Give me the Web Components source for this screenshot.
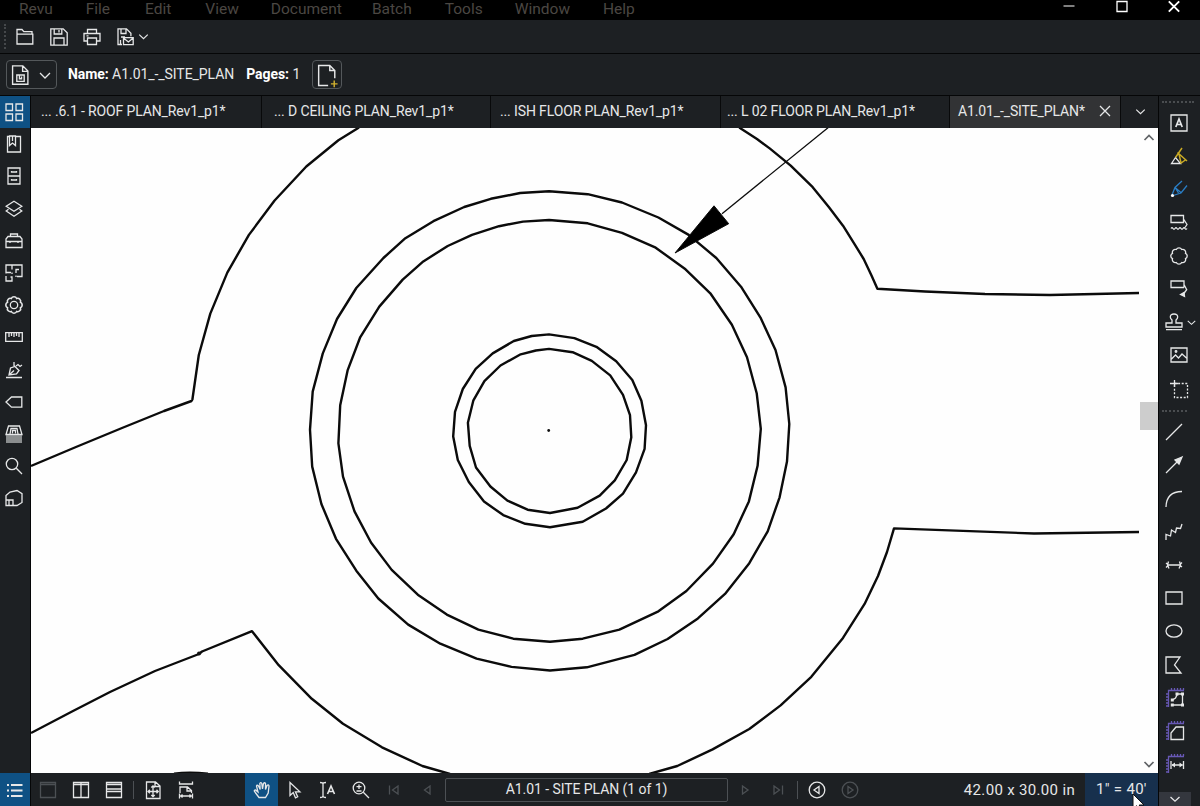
<!DOCTYPE html>
<html lang="en">
<head>
<meta charset="utf-8">
<title>A1.01_-_SITE_PLAN</title>
<style>
    html, body {
        margin: 0;
        width: 1200px;
        height: 806px;
        overflow: hidden;
        background: #1d2023;
    }
</style>
</head>
<body>
<revu-app></revu-app>

<script>
// every glyph is drawn on an 18 x 18 grid
const icons = {
    folder: '<path d="M1 15V1.500h5l1.800 2.200H16V6M1 16V6.200h15.800V16z"/>',
    save: '<path d="M.8.8h12.4l4 4v12.4H.8zM4.2 1v5h7.6V1M9 2v2.5M4 17v-7h10v7"/>',
    print: '<path d="M4.5 5V1.500h9V5M4 13H1V5.500h16V13h-3M4.5 10h9v6.500h-9zM3.5 7.800h2"/>',
    saveMail: '<path d="M5 16.500H1V.8h8.500l4.400 4.400v3M4 1v4.500h5V1M4 9h4M3.500 12v4M6.500 9.600h9.700v7H6.500zM6.500 10l4.900 4 4.800-4"/>',
    fileInfo: '<path d="M1.500.8h9.700l4.800 4.800v12.600H1.500zM11 1v5h5M5.500 9.500h7v6h-7zM8 9.500v3.500h2v-2"/>',
    fileAdd: '<path d="M10 18.500H1.500V.5h10l4.500 4.500v7M11.500.8V5h4.500"/><path d="M15.500 14v6M12.500 17h6" stroke="#d0b02f"/>',
    down: '<path d="M4.500 7l4.500 4.200L13.500 7"/>',
    downWide: '<path d="M4 7l5 5 5-5"/>',
    up: '<path d="M4.500 12l4.500-4.500 4.500 4.500" stroke-width="1.700"/>',
    downBold: '<path d="M4.500 7l4.500 4.500L13.500 7" stroke-width="1.700"/>',
    close: '<path d="M4 4l10 10M14 4L4 14"/>',
    winMin: '<path d="M3.500 9h11" stroke="#aaa" stroke-width="1.500"/>',
    winMax: '<path d="M4 4.500h10v10H4z"/>',
    winClose: '<path d="M3.800 4.300l10.400 10.400M14.200 4.300L3.800 14.700" stroke-width="1.900"/>',
    grid: '<path d="M1 1h6.500v6.500H1zM11 1h6.500v6.500H11zM1 11h6.500v6.500H1zM11 11h6.500v6.500H11z"/>',
    bookmark: '<path d="M5 1.500H2.500V17h13V1.500H11M4.500 1h6v9.500l-3-2.500-3 2.500zM7.500 1v5"/>',
    cabinet: '<path d="M3 1h12v16H3zM3 9h12M6.500 4v1h5V4M6.500 12v1h5v-1"/>',
    layers: '<path d="M9 1.200l7.800 5L9 11.200 1.200 6.200zM3.500 9.200L1.200 11 9 16.200l7.800-5.200-2.300-1.800"/>',
    toolbox: '<path d="M1 15.500V7l2-2.500h12L17 7v8.500zM5.500 4.500V2h7v2.500M1 9.500h16M5 9v2M13 9v2"/>',
    spaces: '<path d="M1 9.500V1h16v11.500h-5M1 8.500h5M1 12V17h6v-4H5.500M7 1v4.500M7 10V8.500M11 9V5.500h3M11 13V11.500"/>',
    gear: '<path d="M15.500 11.700A3 3 0 0 1 11.700 15.500 3 3 0 0 1 6.300 15.500 3 3 0 0 1 2.500 11.700 3 3 0 0 1 2.500 6.300 3 3 0 0 1 6.300 2.500 3 3 0 0 1 11.700 2.500 3 3 0 0 1 15.500 6.300 3 3 0 0 1 15.500 11.700z" stroke-width="1.600"/><circle cx="9" cy="9" r="3.700"/>',
    ruler: '<path d="M.7 4.700h16.600v8.600H.7zM4 5v4M6.500 5v3M9 5v4M11.500 5v3M14 5v4"/>',
    sign: '<path d="M1 16.500h16M4 14l1.500-7 4.500-1.500 4 4-2.500 3.500zM4 14l5-4.500M9 1v3.500l5.500 5.500M11 5l2-1.500 2 2L17 4"/>',
    tag: '<path d="M1 9l5.500-5h10.300v10.200H6.500z"/>',
    stack: '<path d="M3.500 1h11L17 9.500H1z"/><path d="M1 11h16M1 13h16M1 15h16M1 17h16" stroke="#aeb1b3"/><path d="M5 9L6 3.500h6L13 9M7.500 8.500V5.500h3v3" />',
    search: '<circle cx="7" cy="7" r="5.700"/><path d="M11.300 11.300L17 17"/>',
    cube: '<path d="M1 6.500L5 3l7-1.500 5 3.200v8.800l-5 3H1zM4 16v-5h4v5M1 11h3"/>',
    text: '<path d="M1 1h16v16H1z"/><path d="M5.800 13L9 5l3.200 8M7 10.500h4" stroke-width="1.700"/>',
    highlight: '<path d="M1.500 16.500l4-6 5 6z"/><path d="M5.500 10.500L12 1M7.500 5.500L17 14M10.500 16.500L16 12.500M9 7l2 9" stroke="#c9aa25" stroke-width="1.500"/>',
    pen: '<path d="M2 15L5 7.500 12 1M3 15.500l8-2.500 6-7.500M5 7.500l3.500 5.500M5 7.500l6.500 5.500" stroke="#2a7dc4"/><circle cx="2.500" cy="15.500" r="1.600" fill="#fff" stroke="none"/>',
    callCloud: '<path d="M13 8.500H1V1.500h12.500v7zM13.500 5L17 10.500l-2 3M1 14.500q1-1.500 2 0t2 0 2 0 2 0 2 0 2 0 2 0 2 0" />',
    cloud: '<path d="M15.500 11.700A3 3 0 0 1 11.700 15.500 3 3 0 0 1 6.300 15.500 3 3 0 0 1 2.500 11.700 3 3 0 0 1 2.500 6.300 3 3 0 0 1 6.300 2.500 3 3 0 0 1 11.700 2.500 3 3 0 0 1 15.500 6.300 3 3 0 0 1 15.500 11.700z"/>',
    callout: '<path d="M14 7.500H1V1h13v6.500M14 4.500l2.700 5.200L13.500 14"/><path d="M10.500 14.500l3.500-2 .5 4z" fill="currentColor"/>',
    stamp: '<path d="M1 14V10h6V7Q5.300 5.500 5.300 4 5.300 1 9 1t3.700 3Q12.700 5.500 11 7v3h6v4zM1 16.700h16"/>',
    image: '<path d="M1 2h16v14H1zM1.500 13l4-4 3 3 3.500-4 5 4.500"/><circle cx="6" cy="5.500" r=".8"/>',
    crop: '<path d="M4.500 3.500H17.500V17.500H4.500z" stroke-dasharray="2 1.600"/><path d="M0 3.500h8M4.500 0v7"/>',
    line: '<path d="M1 17L17 1"/>',
    arrow: '<path d="M1 17L13 5"/><path d="M17 1l-7 3 4 4z" fill="currentColor"/>',
    arc: '<path d="M1 17Q1.500 1.500 17 1.500"/>',
    poly: '<path d="M1 17v-5.500l4.500 1.500 1-6 4 2.500 1-4.500 4 .5L17 1"/>',
    dimension: '<path d="M2.500 9h13M3.500 5.500L2.500 9l1.500 3.500M14.500 5.500L15.500 9l-1.500 3.500M1 7l2.500 2L1 11.500M17 6.500L14.500 9l2.500 2"/>',
    rect: '<path d="M1 3h16v12H1z"/>',
    ellipse: '<ellipse cx="9" cy="9" rx="8" ry="6.200"/>',
    polygon: '<path d="M1 1h14L9.500 9l6.500 8H1z"/>',
    measureShape: '<path d="M2.500 18V1.500H18M0 5h2M0 8h2M0 11h2M0 14h2M0 17h2M5.500-1v2M8.500-1v2M11.500-1v2M14.500-1v2M17.500-1v2" stroke="#6758b5"/><path d="M6.500 16h10V5h-5L9.500 9l-3 2"/><path d="M4.800 9.500h3v3h-3zM15 3.500h3v3h-3zM4.800 14.500h3v3h-3zM15 14.500h3v3h-3zM9.500 3.500h3v3h-3z" fill="currentColor" stroke="none"/>',
    measureArea: '<path d="M2.500 18V1.500H18M0 5h2M0 8h2M0 11h2M0 14h2M0 17h2M5.500-1v2M8.500-1v2M11.500-1v2M14.500-1v2M17.500-1v2" stroke="#6758b5"/><path d="M5 17.500v-6.500l5-6h7.500v12.500z"/>',
    measureLength: '<path d="M2.500 18V1.500H18M0 5h2M0 8h2M0 11h2M0 14h2M0 17h2M5.500-1v2M8.500-1v2M11.500-1v2M14.500-1v2M17.500-1v2" stroke="#6758b5"/><path d="M5 6v8M17.500 6v8M6 10h10.500"/><path d="M5.500 10L9 7.500v5zM17 10l-3.500-2.500v5z" fill="currentColor" stroke="none"/>',
    list: '<path d="M6 4h11.500M6 9.500h11.500M6 15h11.500M2 4h2M2 9.500h2M2 15h2" stroke-width="1.900"/>',
    pane: '<path d="M1.500 1.500h15v15h-15zM1.500 3.500h15"/>',
    splitV: '<path d="M1.500 1.500h15v15h-15zM9 1.500v15M1.500 3.500h15"/>',
    splitH: '<path d="M1.500 1.500h15v15h-15zM1.500 3.500h15M1.500 8h15M1.500 10.500h15"/>',
    fitPage: '<path d="M2.500 1h9l4.500 4v12.500H2.500zM11 1v4.500h5M9 4.500v11M4 10.500h10M7.300 6.500L9 4.800l1.700 1.700M7.300 14L9 15.700l1.700-1.700M5.800 8.800l-1.700 1.700 1.700 1.700M12.500 8.800l1.700 1.700-1.700 1.700"/>',
    fitWidth: '<path d="M2.500.5V3h13V.5M3 12V6h7.500l4 3.500V12M10 6v4h4.500M2.500 12.500v5M15.500 12.500v5M3 15h12M5.500 13.500L4 15l1.500 1.500M12.500 13.500L14 15l-1.500 1.500"/>',
    hand: '<path d="M6 16.500L1.500 10.500q-.6-1.500 1-1.500l2.500 2L3.500 5q.5-1.700 2 0l1.700 3.500L6.800 2.500q1-1.600 2 0l.7 5.500 1-5.500q1.200-1.500 2 0v6l1.500-4q1.500-1.300 2 .5L15.200 12 12.500 16.500z"/>',
    pointer: '<path d="M4 1.500v13l3.200-3 2.300 5.300 2.200-1-2.300-5h4.500z"/>',
    textSelect: '<path d="M1 1.500q3 0 3 1.500v12q0 1.500-3 1.500M7 1.500Q4 1.500 4 3M7 16.500q-3 0-3-1.500"/><path d="M8.500 13L12 5l3.500 8M9.700 10.500h4.600" stroke-width="1.600"/>',
    zoom: '<circle cx="7" cy="7" r="5.800"/><path d="M11.300 11.300L17 17M4.500 5.700h5M7 3.400V8M4.500 10h5"/>',
    first: '<path d="M4.500 4.500v9M13 5v8L7.500 9z"/>',
    prev: '<path d="M12 5v8L6.500 9z"/>',
    next: '<path d="M6.500 5v8L12 9z"/>',
    last: '<path d="M13.500 4.500v9M5 5v8L10.500 9z"/>',
    back: '<circle cx="9" cy="9" r="7.800"/><path d="M11 5.500v7L6 9z"/>',
    forward: '<circle cx="9" cy="9" r="7.800"/><path d="M7 5.500v7L12 9z"/>'
};

class RevuIcon extends HTMLElement {
    constructor() {
        super();
        const name = this.getAttribute('name');
        const size = this.getAttribute('size') || 18;
        this.attachShadow({ mode: 'open' });
        this.shadowRoot.innerHTML = `
        <style>
            :host { display: block; flex: none; width: ${size}px; height: ${size}px; }
            svg { display: block; overflow: visible; }
        </style>
        <svg width="${size}" height="${size}" viewBox="0 0 18 18" fill="none" stroke="currentColor" stroke-width="1.3">${icons[name] || ''}</svg>`;
    }
}
customElements.define('revu-icon', RevuIcon);

class RevuCell extends HTMLElement {
    constructor() {
        super();
        this.attachShadow({ mode: 'open' });
        this.shadowRoot.innerHTML = `
        <style>
            :host {
                display: flex;
                flex: none;
                align-items: center;
                justify-content: center;
                box-sizing: border-box;
                width: var(--cell-width, 33px);
                height: var(--cell-height, 33px);
            }
            :host([active]) { background: #0f5184; }
            :host([off]) { color: #4c5054; }
        </style>
        <slot></slot>`;
    }
}
customElements.define('revu-cell', RevuCell);

class RevuMenubar extends HTMLElement {
    constructor() {
        super();
        this.attachShadow({ mode: 'open' });
        this.shadowRoot.innerHTML = `
        <style>
            :host { display: flex; height: 20px; background: #000; box-sizing: border-box; overflow: hidden; }
            nav { display: flex; gap: 32px; padding-left: 19px; color: #4b4743; font-size: 15.500px; line-height: 19px; flex: 1; }
            .win { display: flex; gap: 34.500px; padding: 0 17px 0 0; margin-top: -3px; color: #fff; }
        </style>
        <nav><slot></slot></nav>
        <div class="win">
            <revu-icon name="winMin"></revu-icon>
            <revu-icon name="winMax"></revu-icon>
            <revu-icon name="winClose"></revu-icon>
        </div>`;
    }
}
customElements.define('revu-menubar', RevuMenubar);

class RevuTab extends HTMLElement {
    constructor() {
        super();
        this.attachShadow({ mode: 'open' });
        this.shadowRoot.innerHTML = `
        <style>
            :host {
                display: flex;
                align-items: center;
                box-sizing: border-box;
                width: var(--w, 230px);
                padding: 0 6px 2px var(--pad, 8px);
                border-right: 1px solid #08090a;
                white-space: nowrap;
                letter-spacing: -.13px;
            }
            :host([active]) { background: #323335; justify-content: space-between; }
        </style>
        <slot></slot>`;
    }
}
customElements.define('revu-tab', RevuTab);

class SitePlan extends HTMLElement {
    constructor() {
        super();
        this.attachShadow({ mode: 'open' });
        this.shadowRoot.innerHTML = `
        <style>
            :host { display: flex; height: 645px; background: #fefefe; }
            svg { display: block; flex: none; }
            .scroll {
                display: flex;
                flex-direction: column;
                align-items: center;
                width: 19px;
                height: 645px;
                color: #606366;
            }
            .thumb { width: 18px; height: 28px; margin: 256px 0 auto; background: #cdcdcd; }
        </style>
        <svg width="1108" height="645" viewBox="31 128 1108 645" fill="none" stroke="#0b0b0b" stroke-width="2.4" stroke-linejoin="round">
            <path d="M359 127.500L338.400 140.300 306.300 166.500 274.600 200.500 248.900 234.900 227.300 272.600 210.300 313.600 198.800 355 192.400 399.500 191.500 401 164 411 122 428 76 447 31 466"/>
            <path d="M739.200 127.500L757 139 770 148.600 790.700 165.600 812.700 187.200 828.800 207 843 225.700 855 244.800 863.700 259 871.500 275.500 877.400 288.800 925 291.500 985 294 1050 295 1095 294 1139 293"/>
            <path d="M1139 532L1034 533.500 894 528.400 887 552 878 576 864.600 603.900 843 637.900 811.300 676.800 780.600 705.400 749.300 729 712.600 749.400 677.300 766 649.200 774"/>
            <path d="M450 774L422.400 766 382 747.300 343 723.700 311.800 698.800 278.700 665.200 252 631.200 202 651.500 199 654 155 671 110 692 73 711 31 733"/>
            <path d="M549.100 191.300L587.700 194.200 622 202.500 658.400 217.500 688.700 234.900 716.300 258 741 286.700 760.800 318.200 775.500 350 785.600 387.400 789.300 424 787 461.600 779.600 497.300 767.700 531.300 749.300 563.200 725 593.900 697.900 618.400 667.600 639 634.500 654.900 586.800 667.300 550 670.500 511.500 666.900 476.600 658.600 440.300 643.700 408.200 624.600 378.300 598.500 356.300 570.700 336 538.800 321.400 504 312.200 466.600 310 429.700 312.700 391.600 322.800 353.400 337 319 356.300 288 383.400 258 405.400 238.200 433.400 221.200 464.200 207 490.800 198.800 520.200 193z"/>
            <path d="M549.100 220L587.700 223.300 622 232.800 655.700 247.700 685.500 269.300 710.300 293.300 731.900 324.800 747 357.200 756.700 393.200 760.800 428.900 757.600 465.800 748.900 501.400 733.700 534.200 713 563.600 686.400 591 658.400 611.300 619.400 629.600 582.700 638.700 550 641.700 513.300 638.700 478.400 629.600 446.800 614.600 417.800 594.700 391.700 569.900 371 542.500 354.500 511.400 343 476.600 338.400 443.400 340.200 405.300 347.600 370.400 360 337.700 379.300 306.600 402.700 279.600 423.300 261.400 447.700 246 472 234.900 499 226.200 523 221.600z"/>
            <path d="M549 334.400L574.400 338.100 596.400 346.800 616.200 361.300 632.300 380 641.400 400.700 646 425.200 644.600 448.800 636 472.400 623 493.600 606 508.500 582.700 521.800 550 527.200 525.300 523.800 503.200 515.100 484 501.500 468.800 482 457.800 460 453.200 436.400 455 411.900 462.800 389 475.700 368.800 492.700 353.400 513.800 341 531.700 336z"/>
            <path d="M549 348.900L572.600 352.200 591.800 360.900 610.200 375.400 623 394.900 630 415.200 631.300 437.200 626.700 460 614.800 480.300 599.700 495.600 577.600 507.700 550 513 527.600 509.700 507.400 500.600 490.400 486.500 476 467.500 469.700 445.900 467.900 422.700 473.400 400.300 484.400 381.200 500.500 365.500 520.700 354.300 535.800 350.500z"/>
            <path d="M722 213.700L828.300 127.500" stroke-width="1.300"/>
            <path d="M675 253L714 205.800 728.700 223.700z" fill="#000" stroke-width="1"/>
            <path d="M174 773.500q15-2 34 0" stroke-width="2"/>
            <circle cx="548.700" cy="430.500" r="1.400" fill="#111" stroke="none"/>
            <circle cx="199" cy="653.500" r="2" fill="#111" stroke="none"/>
        </svg>
        <div class="scroll">
            <revu-icon name="up"></revu-icon>
            <div class="thumb"></div>
            <revu-icon name="downBold"></revu-icon>
        </div>`;
    }
}
customElements.define('site-plan', SitePlan);

class RevuStatus extends HTMLElement {
    constructor() {
        super();
        this.attachShadow({ mode: 'open' });
        this.shadowRoot.innerHTML = `
        <style>
            :host { display: flex; height: 33px; background: #1d2023; align-items: center; position: relative; }
            hr { width: 1px; height: 18px; margin: 0 2px 0 3px; border: 0; background: #4c5054; flex: none; }
            .gap { width: 43px; flex: none; }
            .page {
                width: 283px;
                height: 24px;
                margin: 0 0 0 2px;
                border: 1px solid #4c5054;
                border-radius: 2px;
                box-sizing: border-box;
                text-align: center;
                font-size: 14px;
                letter-spacing: -.06px;
                line-height: 21px;
                flex: none;
            }
            .size { margin-left: auto; margin-right: 10px; font-size: 15px; letter-spacing: .33px; }
            .scale { width: 73px; height: 33px; line-height: 33px; box-sizing: border-box; padding-left: 11px; background: #17304d; font-size: 15px; letter-spacing: .3px; }
            /* mouse pointer resting on the scale field */
            .mouse { position: absolute; right: 13px; bottom: -6px; }
        </style>
        <revu-cell off><revu-icon name="pane"></revu-icon></revu-cell>
        <revu-cell><revu-icon name="splitV"></revu-icon></revu-cell>
        <revu-cell><revu-icon name="splitH"></revu-icon></revu-cell>
        <hr>
        <revu-cell><revu-icon name="fitPage"></revu-icon></revu-cell>
        <revu-cell><revu-icon name="fitWidth"></revu-icon></revu-cell>
        <div class="gap"></div>
        <revu-cell active><revu-icon name="hand"></revu-icon></revu-cell>
        <revu-cell><revu-icon name="pointer"></revu-icon></revu-cell>
        <revu-cell><revu-icon name="textSelect"></revu-icon></revu-cell>
        <revu-cell><revu-icon name="zoom"></revu-icon></revu-cell>
        <revu-cell off><revu-icon name="first"></revu-icon></revu-cell>
        <revu-cell off><revu-icon name="prev"></revu-icon></revu-cell>
        <div class="page"><slot name="page"></slot></div>
        <revu-cell off><revu-icon name="next"></revu-icon></revu-cell>
        <revu-cell off><revu-icon name="last"></revu-icon></revu-cell>
        <hr>
        <revu-cell><revu-icon name="back"></revu-icon></revu-cell>
        <revu-cell off><revu-icon name="forward"></revu-icon></revu-cell>
        <div class="size"><slot name="size"></slot></div>
        <div class="scale"><slot name="scale"></slot></div>
        <svg class="mouse" width="13" height="19" viewBox="0 0 13 19"><path d="M1 1v15l3.500-3.300L7 18l2.500-1.200L7.200 12H12z" fill="#fff" stroke="#111"/></svg>`;
    }
}
customElements.define('revu-status', RevuStatus);

const leftPanels = ['bookmark', 'cabinet', 'layers', 'toolbox', 'spaces', 'gear', 'ruler', 'sign', 'tag', 'stack', 'search', 'cube'];
const markupTools = ['text', 'highlight', 'pen', 'callCloud', 'cloud', 'callout'];
const shapeTools = ['line', 'arrow', 'arc', 'poly', 'dimension', 'rect', 'ellipse', 'polygon'];
const measureTools = ['measureShape', 'measureArea', 'measureLength'];
const cells = (names) => names.map(n => `<revu-cell><revu-icon name="${n}"></revu-icon></revu-cell>`).join('');

class RevuApp extends HTMLElement {
    constructor() {
        super();
        this.attachShadow({ mode: 'open' });
        this.shadowRoot.innerHTML = `
        <style>
            :host {
                display: flex;
                flex-direction: column;
                width: 1200px;
                height: 806px;
                overflow: hidden;
                background: #1d2023;
                color: #e6e7e8;
                font: 14px/18px Roboto, "Liberation Sans", sans-serif;
            }
            .tools {
                display: flex;
                align-items: center;
                height: 34px;
                box-sizing: border-box;
                border-bottom: 1px solid #050607;
                padding-left: 4px;
                gap: 15.300px;
            }
            .grip { width: 0; height: 25px; border-left: 2px dotted #45484b; margin-right: -5px; }
            .mail { display: flex; align-items: center; margin-left: 1px; }
            .doc {
                display: flex;
                align-items: center;
                height: 42px;
                box-sizing: border-box;
                border-bottom: 1px solid #050607;
                padding-left: 6px;
            }
            .btn {
                display: flex;
                align-items: center;
                box-sizing: border-box;
                height: 29px;
                border: 1px solid #54585b;
                border-radius: 4px;
                padding: 0 2px 0 4px;
            }
            .doc p { margin: -1px 12px 0 11px; letter-spacing: -.06px; }
            .doc p + p { margin-left: 0; }
            b { font-weight: 700; color: #fff; }
            .body { display: flex; height: 710px; }
            .left {
                --cell-width: 30px;
                --cell-height: 32.200px;
                display: flex;
                flex-direction: column;
                width: 31px;
                box-sizing: border-box;
                border-right: 1px solid #050607;
                flex: none;
            }
            .left revu-icon { margin-right: 3px; }
            .left .bottom { margin-top: auto; --cell-height: 33px; }
            .main { display: flex; flex-direction: column; width: 1127px; flex: none; }
            .tabs { display: flex; height: 32px; }
            .caret { display: flex; align-items: center; padding: 0 0 1px 11px; }
            .right {
                --cell-height: 33.200px;
                --cell-width: 32px;
                display: flex;
                flex-direction: column;
                width: 42px;
                box-sizing: border-box;
                border-left: 1px solid #050607;
                overflow: hidden;
            }
            .dots { width: 32px; height: 0; border-top: 2px dotted #4a4d50; margin: 5px 0 0 3px; flex: none; }
            .right .markup { padding: 3.500px 0 0 4px; }
            .stamp { display: flex; align-items: center; height: 33.200px; gap: 1px; padding-left: 6px; }
            .right .pair { padding-left: 4px; }
            .shapes { padding: 3.500px 0 0; }
            .shapes revu-icon { margin-right: 3px; }
            .measure revu-icon { margin-right: 1px; }
            .more { display: flex; align-items: center; justify-content: center; width: 32px; height: 14px; background: #34373e; margin-top: auto; }
            .m1 { margin-right: 1px; }
            .m2 { margin-right: 2px; }
            .m3 { margin-right: 3px; }
            .doc-item { margin-right: -2px; }
        </style>
        <revu-menubar>
            <span class="m1">Revu</span><span class="m3">File</span><span class="m2">Edit</span><span>View</span><span class="doc-item">Document</span><span class="m1">Batch</span><span>Tools</span><span class="m1">Window</span><span>Help</span>
        </revu-menubar>
        <div class="tools">
            <div class="grip"></div>
            <revu-icon name="folder"></revu-icon>
            <revu-icon name="save"></revu-icon>
            <revu-icon name="print"></revu-icon>
            <div class="mail"><revu-icon name="saveMail"></revu-icon><revu-icon name="down" size="17"></revu-icon></div>
        </div>
        <div class="doc">
            <div class="btn" style="width:51px;gap:6px"><revu-icon name="fileInfo" size="19"></revu-icon><revu-icon name="downWide"></revu-icon></div>
            <p><b>Name:</b> A1.01_-_SITE_PLAN</p>
            <p><b>Pages:</b> 1</p>
            <div class="btn" style="width:30px"><revu-icon name="fileAdd" size="20"></revu-icon></div>
        </div>
        <div class="body">
            <div class="left">
                <revu-cell active><revu-icon name="grid"></revu-icon></revu-cell>
                ${cells(leftPanels)}
                <revu-cell class="bottom" active><revu-icon name="list"></revu-icon></revu-cell>
            </div>
            <div class="main">
                <div class="tabs">
                    <revu-tab style="--w:231px;--pad:10px">... .6.1 - ROOF PLAN_Rev1_p1*</revu-tab>
                    <revu-tab style="--w:229px;--pad:12px">... D CEILING PLAN_Rev1_p1*</revu-tab>
                    <revu-tab style="--w:230px;--pad:9px">... ISH FLOOR PLAN_Rev1_p1*</revu-tab>
                    <revu-tab style="--w:229px;--pad:6px">... L 02 FLOOR PLAN_Rev1_p1*</revu-tab>
                    <revu-tab active style="--w:171px;--pad:8px"><span>A1.01_-_SITE_PLAN*</span><revu-icon name="close"></revu-icon></revu-tab>
                    <div class="caret"><revu-icon name="down" size="17"></revu-icon></div>
                </div>
                <site-plan></site-plan>
                <revu-status>
                    <span slot="page">A1.01 - SITE PLAN (1 of 1)</span>
                    <span slot="size">42.00 x 30.00 in</span>
                    <span slot="scale">1" = 40'</span>
                </revu-status>
            </div>
            <div class="right">
                <div class="dots"></div>
                <div class="markup">${cells(markupTools)}</div>
                <div class="stamp"><revu-icon name="stamp"></revu-icon><revu-icon name="down" size="15"></revu-icon></div>
                <div class="pair">${cells(['image', 'crop'])}</div>
                <div class="dots" style="width:25px"></div>
                <div class="shapes">${cells(shapeTools)}</div>
                <div class="measure">${cells(measureTools)}</div>
                <div class="more"><revu-icon name="down"></revu-icon></div>
            </div>
        </div>`;
        // cells live in this root, so the icon margins above reach them
    }
}
customElements.define('revu-app', RevuApp);
</script>
</body>
</html>
